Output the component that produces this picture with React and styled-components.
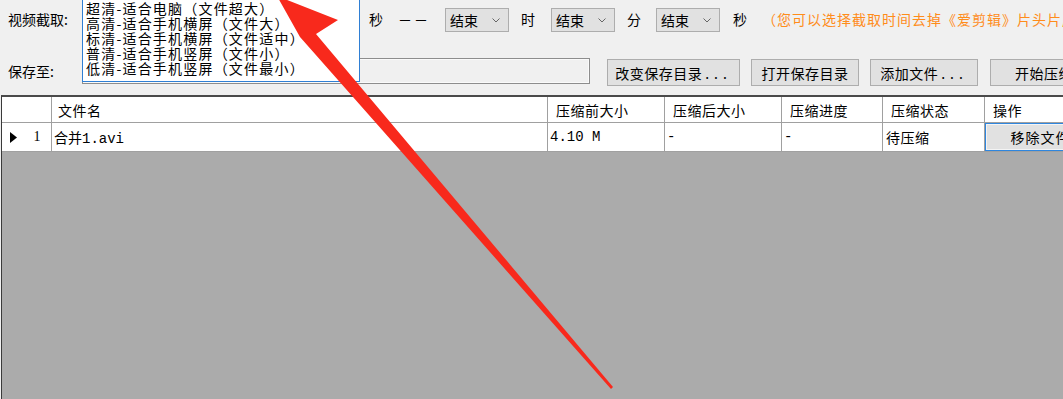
import React from 'react'
import styled, { createGlobalStyle } from 'styled-components'

const GlobalStyle = createGlobalStyle`
  html, body {
    margin: 0;
    padding: 0;
    background: #f0f0f0;
    overflow: hidden;
  }
  body {
    font-family: "Noto Sans CJK SC", "Microsoft YaHei", sans-serif;
    font-size: 14px;
    color: #000;
  }
`

// 画面全体
const Window = styled.div`
  position: relative;
  width: 1063px;
  height: 399px;
  overflow: hidden;
  background: #f0f0f0;
  display: flex;
  flex-direction: column;
`

const Toolbar = styled.div`
  display: flex;
  flex-direction: column;
  padding-left: 8px;
`

const Row = styled.div`
  display: flex;
  align-items: center;
  height: ${p => p.$h}px;
  margin-top: ${p => p.$mt || 0}px;
  white-space: nowrap;
`

const Label = styled.span`
  flex: none;
  width: ${p => (p.$w ? `${p.$w}px` : 'auto')};
  margin-left: ${p => p.$ml || 0}px;
  margin-top: -2px;
  line-height: 20px;
  letter-spacing: ${p => p.$ls || 0}px;
  color: ${p => p.$color || '#000'};
`

const Combo = styled.div`
  flex: none;
  box-sizing: border-box;
  width: ${p => p.$w}px;
  height: 24px;
  margin-left: ${p => p.$ml || 0}px;
  padding: 0 8px 0 4px;
  display: flex;
  align-items: center;
  justify-content: space-between;
  background: #e1e1e1;
  border: 1px solid #adadad;
  line-height: 20px;
`

const PathInput = styled.div`
  flex: none;
  align-self: flex-start;
  box-sizing: border-box;
  width: 508px;
  height: 26px;
  background: #f0f0f0;
  border: 1px solid #8d8d8d;
  box-shadow: inset 0 0 0 1px #fafafa;
`

const Button = styled.div`
  flex: none;
  align-self: flex-start;
  box-sizing: border-box;
  width: ${p => p.$w}px;
  height: 27px;
  margin-top: 1px;
  margin-left: ${p => p.$ml || 0}px;
  display: flex;
  align-items: center;
  justify-content: center;
  background: #e1e1e1;
  border: 1px solid #adadad;
  line-height: 20px;
  letter-spacing: 0.5px;
`

const Dots = styled.span`
  letter-spacing: 5px;
  margin-left: 3px;
`

// 表格部分
const cols = '50px 496px 117px 117px 101px 102px 100px'

const Grid = styled.div`
  flex: 1;
  margin: 9px 0 0 1px;
  background: #ababab;
  border-top: 2px solid #4a4a4a;
  border-left: 1px solid #3a3a3a;
`

const GridRow = styled.div`
  display: grid;
  grid-template-columns: ${cols};
  height: ${p => p.$h}px;
  background: #fff;
`

const Cell = styled.div`
  box-sizing: border-box;
  display: flex;
  align-items: center;
  justify-content: ${p => p.$justify || 'flex-start'};
  padding: 0 ${p => p.$pr || 0}px 0 ${p => p.$pl ?? 2}px;
  border-right: 1px solid #a0a0a0;
  border-bottom: 1px solid #a0a0a0;
  white-space: nowrap;
  overflow: hidden;
  font-family: ${p => (p.$mono ? '"Liberation Mono", "Noto Sans CJK SC", monospace' : '"Noto Sans CJK SC", sans-serif')};
  font-size: 14px;
  letter-spacing: ${p => (p.$mono ? 0 : 0.5)}px;
`

const RowNo = styled.span`
  font-family: "Liberation Serif", serif;
  font-size: 14px;
`

const RemoveButton = styled.div`
  box-sizing: border-box;
  width: 100%;
  height: 100%;
  display: flex;
  align-items: center;
  justify-content: center;
  background: #e1e1e1;
  border: 1px solid #2f86de;
  box-shadow: inset 0 0 0 1px #f4f4f4;
  font-family: "Noto Sans CJK SC", sans-serif;
  letter-spacing: 1px;
  padding-left: 12px;
`

// 下拉列表 (浮在上面)
const Popup = styled.ul`
  position: absolute;
  left: 82px;
  top: -1px;
  box-sizing: border-box;
  width: 278px;
  height: 83px;
  margin: 0;
  padding: 1px 0 0 3px;
  list-style: none;
  background: #fff;
  border: 1px solid #2f7fd4;
`

const PopupItem = styled.li`
  font-size: 14px;
  line-height: 15px;
  height: 15px;
  letter-spacing: 1.2px;
  white-space: nowrap;
  color: #000;
`

const Overlay = styled.svg`
  position: absolute;
  left: 0;
  top: 0;
  pointer-events: none;
`

const Chevron = () => (
  <svg width="8" height="5" viewBox="0 0 8 5">
    <polyline points="0.5,0.5 4,4 7.5,0.5" fill="none" stroke="#666" strokeWidth="1" />
  </svg>
)

const Select = ({ ml }) => (
  <Combo $w={64} $ml={ml}>
    <span>结束</span>
    <Chevron />
  </Combo>
)

const options = [
  '超清-适合电脑（文件超大）',
  '高清-适合手机横屏（文件大）',
  '标清-适合手机横屏（文件适中）',
  '普清-适合手机竖屏（文件小）',
  '低清-适合手机竖屏（文件最小）',
]

const headers = ['', '文件名', '压缩前大小', '压缩后大小', '压缩进度', '压缩状态', '操作']

export default function App() {
  return (
    <>
      <GlobalStyle />
      <Window>
        <Toolbar>
          <Row $h={40}>
            <Label $w={74}>视频截取:</Label>
            <Combo $w={278} />
            <Label $ml={9}>秒</Label>
            <Label $ml={15} $ls={2}>－－</Label>
            <Select ml={15} />
            <Label $ml={12}>时</Label>
            <Select ml={16} />
            <Label $ml={12}>分</Label>
            <Select ml={15} />
            <Label $ml={13}>秒</Label>
            <Label $ml={15} $ls={1} $color="#ff8c1a">（您可以选择截取时间去掉《爱剪辑》片头片尾）</Label>
          </Row>
          <Row $h={28} $mt={18}>
            <Label $w={74}>保存至:</Label>
            <PathInput />
            <Button $w={133} $ml={17}>改变保存目录<Dots>...</Dots></Button>
            <Button $w={108} $ml={11}>打开保存目录</Button>
            <Button $w={108} $ml={11}>添加文件<Dots>...</Dots></Button>
            <Button $w={108} $ml={12}>开始压缩</Button>
          </Row>
        </Toolbar>

        <Grid>
          <GridRow $h={26}>
            {headers.map((h, i) => (
              <Cell key={i} $pl={i === 1 ? 6 : 8}>{h}</Cell>
            ))}
          </GridRow>
          <GridRow $h={29}>
            <Cell $justify="space-between" $pl={8} $pr={10}>
              <svg width="7" height="11" viewBox="0 0 7 11">
                <polygon points="0,0 7,5.5 0,11" fill="#000" />
              </svg>
              <RowNo>1</RowNo>
            </Cell>
            <Cell $mono>合并1.avi</Cell>
            <Cell $mono>4.10 M</Cell>
            <Cell $mono>-</Cell>
            <Cell $mono>-</Cell>
            <Cell $pl={3}>待压缩</Cell>
            <Cell $pl={0}>
              <RemoveButton>移除文件</RemoveButton>
            </Cell>
          </GridRow>
        </Grid>

        <Popup>
          {options.map(o => (
            <PopupItem key={o}>{o}</PopupItem>
          ))}
        </Popup>

        {/* 红色箭头标注 */}
        <Overlay width="1063" height="399" viewBox="0 0 1063 399">
          <polygon
            points="277,-4 338,20 316,34 613,387 611,389 300,37"
            fill="#f8291c"
          />
        </Overlay>
      </Window>
    </>
  )
}
